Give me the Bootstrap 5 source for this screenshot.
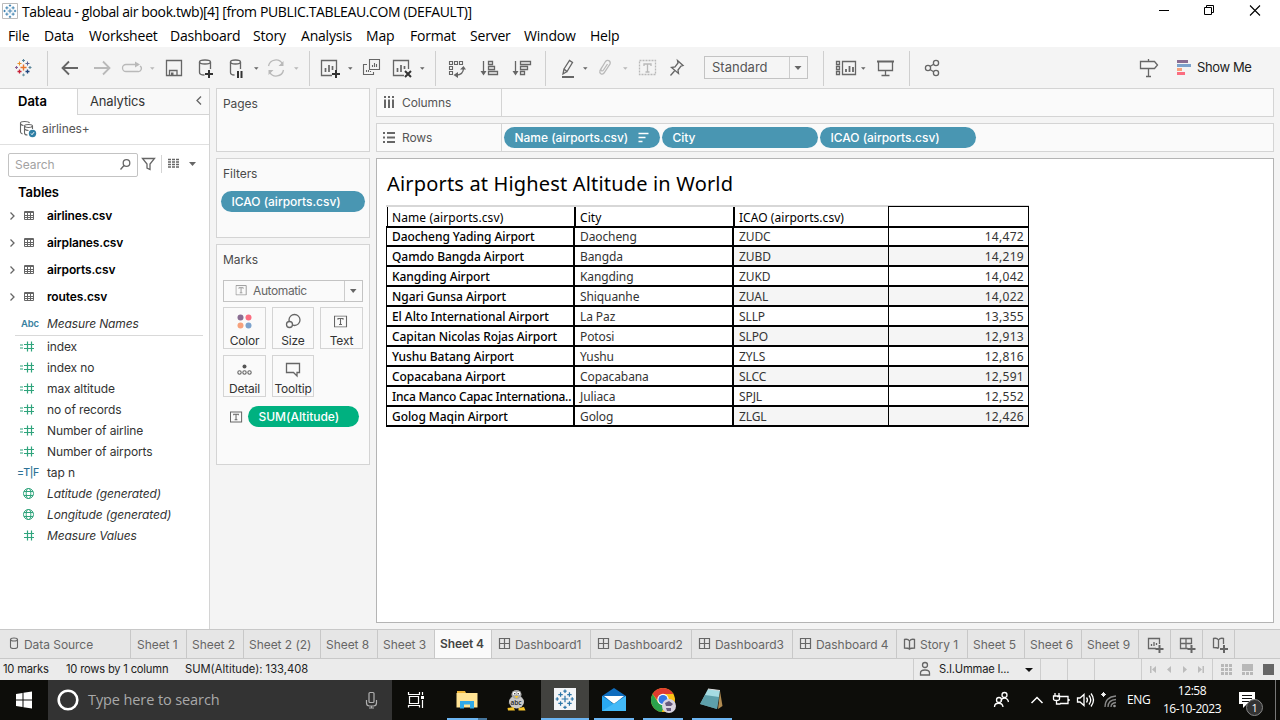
<!DOCTYPE html>
<html lang="en">
<head>
<meta charset="utf-8">
<title>Tableau - global air book</title>
<link href="https://cdn.jsdelivr.net/npm/bootstrap@5.3.0/dist/css/bootstrap.min.css" rel="stylesheet">
<style>
:root{--ui:Inter,"Liberation Sans",sans-serif;--sys:"Open Sans","Noto Sans",sans-serif;--tb:"Noto Sans","Open Sans",sans-serif;--line:#d4d4d4}
body{width:1280px;height:720px;overflow:hidden;background:#f4f4f4;font:400 12px/1 var(--ui);color:#333}
svg{display:block;overflow:visible;flex:none}
.ln{fill:none;stroke:#666;stroke-width:1.3}
.thin{stroke-width:1.1}
.bold{stroke-width:1.8}
.dim{stroke:#b9b9b9}
.t{white-space:nowrap}
.titlebar{height:24px;font:14px/24px var(--sys);letter-spacing:-.38px;color:#000}
.menubar{height:23px;font:14px/24px var(--sys);letter-spacing:-.2px;color:#000;display:grid;grid-template-columns:36px 45px 81px 83px 48px 65px 44px 60px 54px 66px 60px;padding-left:8px}
.toolbar{height:41px;display:grid;grid-template-columns:47px 43px 28px 42px 30px 32px 40px 47px 46px 30px 50px 40px 30px 40px 47px 40px 30px 41px 120px 47px 39px 46px 175px 39px 1fr}
.std{margin:9px 0 0 1px;width:104px;height:23px;border:1px solid #c3c3c3;background:#f5f5f5;font-size:13px;line-height:21px;color:#555}
.std span{padding-left:7px}
.showme{font-size:13px;line-height:41px;color:#222;letter-spacing:-.4px}
.work{height:541px;display:grid;grid-template-columns:210px 6px 154px 6px 898px 6px}
.side{border-top:1px solid var(--line);border-right:1px solid var(--line);background:#fff;height:541px}
.side-tabs{height:26px;line-height:25px;font-size:13px}
.side-tabs .off{width:132px;border-left:1px solid var(--line);border-bottom:1px solid var(--line);background:#f9f9f9;padding-left:12px;letter-spacing:-.15px}
.side-tabs .on{width:77px;padding-left:18px;color:#000;font-weight:600}
.src{height:30px;border-bottom:1px solid #e0e0e0;line-height:28px;color:#555;letter-spacing:-.1px}
.find{height:38px}
.find-box{width:130px;height:24px;border:1px solid #c3c3c3;border-radius:2px;color:#a2a2a2;line-height:22px;padding-left:6px;letter-spacing:-.05px;margin:8px 0 0 8px}
.tables{height:19px;line-height:18px;padding-left:18px;font-size:13px;font-weight:600;color:#000;letter-spacing:-.1px}
.tbl-row{height:27px;line-height:27px;font-weight:600;color:#000;letter-spacing:-.13px}
.tbl-row svg{width:47px;height:27px}
.mnames{height:26px;line-height:27px;letter-spacing:-.12px}
.abc{width:47px;padding-left:21px;font:600 9.5px/28px var(--ui);color:#38809f}
.rule{margin:-1px 6px 0 15px;height:1px;border-top:1px solid #d9d9d9}
.fld{height:21px;line-height:21px;font-size:12px;letter-spacing:-.12px}
.fld svg{width:47px;height:21px}
.tf{width:47px;padding-left:17px;font-size:10.5px;color:#2d7297;font-weight:500;letter-spacing:-.35px}
.panel{border:1px solid var(--line);background:#fafafa}
.panel-h{padding-left:6px;line-height:29px;color:#4a4a4a;letter-spacing:-.05px}
.pill{height:21px;border-radius:11px;background:#4996b2;color:#fff;line-height:21px;padding-left:10.500px;font-weight:500;letter-spacing:-.02px}
.mk{width:140px;height:22px;border:1px solid #c3c3c3;color:#666;line-height:20px;background:#fafafa;margin:6px 0 5px 6px;letter-spacing:-.4px}
.mkgrid{display:grid;grid-template-columns:43px 42px 43px;gap:6px;margin-left:6px}
.mkb{height:42px;border:1px solid var(--line);text-align:center;background:#fafafa;letter-spacing:-.2px}
.mkb svg{height:24px;width:100%}
.mkb div{line-height:17px}
.shelf{height:29px;line-height:27px;color:#555;letter-spacing:-.1px}
.shelf .hd{width:125px;border-right:1px solid var(--line)}
.view{border:1px solid #b4b4b4;background:#fff;height:465px;padding:12px 0 0 9px;font-family:var(--tb);color:#000}
.view h1{font:400 20px/26px var(--tb);letter-spacing:.17px;margin:0 0 0 1px;color:#000}
.gridt{width:643px;margin-top:8px;border-top:2px solid #d7d7d7;font-size:12px}
.gridt .r{display:grid;grid-template-columns:187px 159px 156px 141px;height:20px;line-height:20px;border-bottom:2px solid #000}
.gridt .r>div{border-left:2px solid #000;padding-left:5px;overflow:hidden;white-space:nowrap;color:#333;letter-spacing:-.1px}
.gridt .r>div:first-child{font-weight:500;color:#000;border-left-width:1px;letter-spacing:-.06px}
.gridt .r>div:nth-child(4){border-left-width:1px;border-right:1px solid #000;text-align:right;padding:0 4px 0 0;letter-spacing:.3px}
.gridt .r:nth-child(odd):not(.hdr)>div:nth-child(n+3){background:#f5f5f5}
.gridt .r:nth-child(2){height:19px;line-height:18px}
.gridt .r .fit{letter-spacing:-.22px}
.gridt .hdr{height:21px;line-height:21px}
.gridt .hdr>div{color:#000;letter-spacing:.05px}
.gridt .hdr>div:first-child{margin-left:1px;padding-left:4px;font-weight:400;letter-spacing:.1px}
.gridt .hdr>div:nth-child(2),.gridt .hdr>div:nth-child(3){margin-left:1px;padding-left:4px}
.gridt .hdr>div:nth-child(4){border-top:1px solid #000;margin-top:-1px}
.tabs{height:30px;border-top:1px solid #c8c8c8;border-bottom:1px solid #c8c8c8;background:#e6e6e6;line-height:30px;color:#666;display:grid;grid-template-columns:131px 56px 57px 77px 57px 57px 57px 99px 101px 101px 104px 71px 57px 57px 57px 32px 32px 32px;font-size:12px;letter-spacing:-.05px}
.tabs>div{border-right:1px solid #c8c8c8;padding-left:5px;display:flex;white-space:nowrap;height:28px}
.tabs>div:nth-child(2){padding-left:6px}
.tabs .cur{background:#fafafa;color:#444;font-weight:600;line-height:28px;letter-spacing:-.1px}
.tabs .ic{padding-left:0}
.status{height:21px;background:#ebebeb;line-height:21px;font-size:11.2px;color:#222;display:grid;grid-template-columns:66px 119px 728px 127px 27px 27px 47px 71px 1fr}
.status .s{border-left:1px solid #cdcdcd}
.tight{letter-spacing:-.2px}
.task{height:40px;background:#0d0d0a;display:grid;grid-template-columns:48px 344px 48px 52px 49px 48px 49px 49px 49px 240px 147px 36px 66px 1fr;color:#fff;font-family:var(--sys)}
.cort{background:#333;color:#a9a9a9;font-size:14.500px;line-height:40px;letter-spacing:-.1px}
.app-on{background:#42423f}
.eng{font-size:12px;line-height:40px;padding-left:4px;letter-spacing:-.4px}
.clock{font-size:12px;text-align:center;letter-spacing:-.45px;line-height:18px;padding-top:2px}
</style>
</head>
<body>
<svg width="0" height="0" class="position-absolute">
<defs>
<symbol id="tblmark" viewBox="0 0 18 18"><g fill="none" stroke-width="1.1">
<path stroke="#e8762d" stroke-width="1.400" d="M9 6v6M6 9h6"/><path stroke="#5b6591" d="M13 3v4M11 5h4"/><path stroke="#5b879b" d="M9 .5v3M7.500 2h3M15.500 7.500v3M14 9h3"/><path stroke="#c72037" stroke-width="1.300" d="M5 11v4M3 13h4"/><path stroke="#1f457e" stroke-width="1.300" d="M13 11v4M11 13h4"/><path stroke="#eb9129" d="M5 3v4M3 5h4"/><path stroke="#7099a6" d="M9 15v3M7.500 16.500h3"/><path stroke="#8b5f96" d="M2 7.500v3M.5 9h3"/></g></symbol>
<symbol id="tblblue" viewBox="0 0 18 18"><path fill="none" stroke="#2d76a8" stroke-width="1.100" d="M9 6v6M6 9h6M13 3v4M11 5h4M9 .5v3M7.500 2h3M15.500 7.500v3M14 9h3M5 11v4M3 13h4M13 11v4M11 13h4M5 3v4M3 5h4M9 15v3M7.500 16.500h3M2 7.500v3M.5 9h3"/></symbol>
<symbol id="dd" viewBox="0 0 6 4"><path d="M0 .5h5.500L2.750 3.500z"/></symbol>
<symbol id="trow" viewBox="0 0 47 27"><path class="ln" d="M10.500 10.500l3.500 3.500-3.500 3.500"/><path fill="none" stroke="#666" d="M24.500 9.500h9v8h-9zM24 10.500h10M24 13.500h10M24 15.500h10M27.500 11v7M30.500 11v7"/></symbol>
<symbol id="num" viewBox="0 0 47 21"><path fill="none" stroke="#2fa47c" stroke-width="1.200" d="M20 9h3M20 12h3M24 8.500h10M24 12.500h10M27.500 5.500v10M31.500 5.500v10"/></symbol>
<symbol id="hash" viewBox="0 0 47 21"><path fill="none" stroke="#2fa47c" stroke-width="1.200" d="M24 8.500h10M24 12.500h10M27.500 5.500v10M31.500 5.500v10"/></symbol>
<symbol id="globe" viewBox="0 0 47 21"><g fill="none" stroke="#2fa47c"><circle cx="28.500" cy="10.500" r="5"/><ellipse cx="28.500" cy="10.500" rx="2.300" ry="5"/><path d="M24 8.500h9M24 12.500h9"/></g></symbol>
<symbol id="dash" viewBox="0 0 22 28"><path fill="none" stroke="#666" stroke-width="1.200" d="M7.500 8.500h10v10h-10zM12.500 8.500v10M7.500 13.500h10"/></symbol>
<symbol id="tbox" viewBox="0 0 14 12"><path fill="none" stroke="#666" stroke-width="1.100" d="M.5.5h12v11H.5zM4 4.200V3h5v1.200M6.500 3v6M5 9h3"/></symbol>
</defs></svg>

<div class="titlebar bg-white d-flex">
<svg width="22" height="24" viewBox="0 0 22 24"><path fill="#fff" stroke="#bbb" d="M2.500 3.500h15v15h-15z"/><use href="#tblblue" x="3" y="4" width="14" height="14"/></svg>
<div class="t flex-grow-1">Tableau - global air book.twb)[4] [from PUBLIC.TABLEAU.COM (DEFAULT)]</div>
<svg width="140" height="24" viewBox="1140 0 140 24"><g fill="none" stroke="#000"><path d="M1159 10.500h10M1204.500 7.500h7v7h-7zM1206.500 7.500v-2h7v7h-2"/><path d="M1250 5.500l10 10M1260 5.500l-10 10" stroke-width="1.100"/></g></svg>
</div>
<div class="menubar bg-white"><div>File</div><div>Data</div><div>Worksheet</div><div>Dashboard</div><div>Story</div><div>Analysis</div><div>Map</div><div>Format</div><div>Server</div><div>Window</div><div>Help</div></div>

<div class="toolbar">
<svg width="47" height="41" viewBox="0 47 47 41"><use href="#tblmark" x="14.500" y="58.500" width="18" height="18"/></svg>
<svg width="43" height="41" viewBox="47 47 43 41"><path stroke="#cfcfcf" d="M47.500 51v35"/><path class="ln bold" d="M78 68H63M69 61.500L62.500 68l6.500 6.500"/></svg>
<svg width="28" height="41" viewBox="90 47 28 41"><path class="ln bold dim" d="M94 68h15M103 61.500l6.500 6.500-6.500 6.500"/></svg>
<svg width="42" height="41" viewBox="118 47 42 41"><path class="ln dim" d="M135 71.500h-9a3.500 3.500 0 0 1 0-7h10M134 71.500h4a3 3 0 0 0 2-5.500"/><path fill="#b9b9b9" d="M135 61.500l5 3-5 3z"/><use href="#dd" x="150" y="66.500" width="5" height="4" fill="#b9b9b9"/></svg>
<svg width="30" height="41" viewBox="160 47 30 41"><path class="ln" d="M166.500 60.500h15v15h-15zM169.500 75.500v-5h7.500v5"/><path fill="#666" d="M171 72.500h2.500v3H171z"/></svg>
<svg width="32" height="41" viewBox="190 47 32 41"><path class="ln" d="M199.500 62v10.500c0 1.500 2 2.500 5 2.500M210.500 62v7"/><ellipse class="ln" cx="205" cy="62" rx="5.500" ry="2"/><path stroke="#333" stroke-width="2" d="M209 70v8M205 74h8"/></svg>
<svg width="40" height="41" viewBox="222 47 40 41"><path class="ln" d="M230.500 62v10.500c0 1.500 2 2.500 4 2.500M240.500 62v7"/><ellipse class="ln" cx="235.500" cy="62" rx="5" ry="2"/><path stroke="#333" stroke-width="2" d="M238 71v7M241.500 71v7"/><use href="#dd" x="254" y="66.500" width="5" height="4" fill="#666"/></svg>
<svg width="47" height="41" viewBox="262 47 47 41"><path class="ln dim" d="M268.500 66a7.500 7.500 0 0 1 14-2M283.500 70a7.500 7.500 0 0 1-14 2"/><path fill="#b9b9b9" d="M283.500 61v5h-5zM268.500 75v-5h5z"/><use href="#dd" x="294" y="66.500" width="5" height="4" fill="#b9b9b9"/></svg>
<svg width="46" height="41" viewBox="309 47 46 41"><path stroke="#cfcfcf" d="M309.500 51v35"/><path class="ln" d="M332 75.500h-10.500v-15h15V70"/><path stroke="#666" stroke-width="1.700" d="M325.500 72v-4M329 72v-7M332.500 70v-4"/><path stroke="#333" stroke-width="2" d="M336 70v8M332 74h8"/><use href="#dd" x="348" y="66.500" width="5" height="4" fill="#666"/></svg>
<svg width="30" height="41" viewBox="355 47 30 41"><path class="ln thin" d="M369.500 59.500h10v10h-10zM367 64.500h-3.500v10h10V72"/><path stroke="#666" stroke-width="1.100" d="M372.500 67v-2M374.500 67v-4M376.500 67v-3M366.500 72v-2M368.500 72v-2M370.500 72v-1"/></svg>
<svg width="50" height="41" viewBox="385 47 50 41"><path class="ln" d="M404 75.500h-10.500v-15h15V69"/><path stroke="#666" stroke-width="1.700" d="M397.500 72v-4M401 72v-7M404.500 69v-3"/><path stroke="#333" stroke-width="2" d="M405 71l6 6M411 71l-6 6"/><use href="#dd" x="420" y="66.500" width="5" height="4" fill="#666"/></svg>
<svg width="40" height="41" viewBox="435 47 40 41"><path stroke="#cfcfcf" d="M435.500 51v35"/><path class="ln thin" d="M449.500 61.500h3v3h-3zM454.500 61.500h3v3h-3zM459.500 61.500h3v3h-3zM449.500 66.500h3v3h-3zM449.500 71.500h3v3h-3z"/><path class="ln" d="M463.500 68c0 5-2.500 7-7.500 7"/><path fill="#666" d="M460 69.500l3.500-3.500 2.500 3.500zM458 72l-4.500 3 4.500 3z"/></svg>
<svg width="30" height="41" viewBox="475 47 30 41"><path class="ln" d="M483.500 61v12M488.500 61.500h4v3h-4zM488.500 66.500h6v3h-6zM488.500 71.500h9v3h-9z"/><path fill="#666" d="M480.500 71h6l-3 4.500z"/></svg>
<svg width="40" height="41" viewBox="505 47 40 41"><path class="ln" d="M515.500 61v12M520.500 61.500h10v3h-10zM520.500 66.500h7v3h-7zM520.500 71.500h4v3h-4z"/><path fill="#666" d="M512.500 71h6l-3 4.500z"/></svg>
<svg width="47" height="41" viewBox="545 47 47 41"><path stroke="#cfcfcf" d="M545.500 51v35"/><path class="ln" d="M564 69l5.500-8.500 3 2-5.500 9zM564 69l-1 5 4-2.500"/><path stroke="#666" stroke-width="2" d="M562 77h12"/><use href="#dd" x="583" y="66.500" width="5" height="4" fill="#666"/></svg>
<svg width="40" height="41" viewBox="592 47 40 41"><path class="ln dim" d="M602 67l-2 3.500c-1 3 2 5 4 2.500l6-9c1-3-2.500-5-4.500-2.500l-4.500 7.500c-.5 2 1.500 2.500 2.500 1l4-6"/><use href="#dd" x="623" y="66.500" width="5" height="4" fill="#b9b9b9"/></svg>
<svg width="30" height="41" viewBox="632 47 30 41"><path class="ln dim" stroke-dasharray="2 1" d="M639.500 60.500h16v14h-16z"/><path class="ln dim" d="M644 66v-2h7v2M647.500 64v8M645.500 72h4"/></svg>
<svg width="41" height="41" viewBox="662 47 41 41"><path class="ln" d="M677.500 60.500l5.500 5-2 .5-3 4 .5 3.500-7-6 3.500-.5 3-4zM674.500 71l-4 4.500"/></svg>
<div class="std d-flex"><span class="flex-grow-1">Standard</span><svg width="18" height="21" viewBox="0 0 18 21"><path stroke="#ccc" d="M.5 0v21"/><path fill="#666" d="M5.500 9h7l-3.500 4z"/></svg></div>
<svg width="47" height="41" viewBox="823 47 47 41"><path stroke="#cfcfcf" d="M823.500 51v35"/><path class="ln" d="M836.500 61.500h3v3h-3zM836.500 66.500h3v3h-3zM836.500 71.500h3v3h-3zM842.500 61.500h13v13h-13z"/><path stroke="#666" stroke-width="1.800" d="M846 72v-3M849.500 72v-6M853 72v-5"/><use href="#dd" x="861" y="66.500" width="5" height="4" fill="#666"/></svg>
<svg width="39" height="41" viewBox="870 47 39 41"><path stroke="#666" stroke-width="2" d="M877 61.500h17"/><path class="ln" d="M878.500 62v8.500h14V62M885.500 71v4M881.500 75.500h8"/></svg>
<svg width="46" height="41" viewBox="909 47 46 41"><path stroke="#cfcfcf" d="M909.500 51v35"/><g class="ln"><circle cx="928" cy="68" r="2.600"/><circle cx="936" cy="63" r="2.600"/><circle cx="936" cy="73" r="2.600"/><path d="M930 66.500l4-2.500M930 69.500l4 2.500"/></g></svg>
<div></div>
<svg width="39" height="41" viewBox="1130 47 39 41"><path class="ln" d="M1140.500 61.500h14l3 3.500-3 3.500h-14zM1148.500 59v2M1148.500 69v7.500M1146 76.500h5"/></svg>
<div class="showme d-flex"><svg width="28" height="41" viewBox="1169 47 28 41"><path fill="#8a6d92" d="M1177 60h11v3h-11z"/><path fill="#7ca2cc" d="M1177 64h14v3h-14z"/><path fill="#f6a17c" d="M1177 68h5v3h-5z"/><path fill="#fb6d80" d="M1177 72h8v3h-8z"/></svg><span class="t">Show Me</span></div>
</div>

<div class="work">
<div class="side">
<div class="side-tabs d-flex"><div class="on">Data</div><div class="off d-flex justify-content-between"><span>Analytics</span><svg width="15" height="25"><path class="ln" d="M7 7.500L3 11.500l4 4"/></svg></div></div>
<div class="src d-flex"><svg width="42" height="30" viewBox="0 115 42 30"><path class="ln thin" d="M20.500 123v9c0 1 1 1.500 2 2M20.500 123c0-2 8-2 9 0M24.500 126v7c0 1 1 2 3 2M24.500 126c0-2 8-2 8 0v3M24.500 126c1 2 7 2 8 0M20.500 124c1 1 2 1.500 3 1.500M24.500 129c1 1 3 1.500 4 1.500"/><circle cx="32.500" cy="133.500" r="3.700" fill="#2f7fa5"/><path fill="none" stroke="#fff" d="M31 133.500l1 1.200 2-2.500"/></svg><span>airlines+</span></div>
<div class="find d-flex"><div class="find-box d-flex justify-content-between">Search<svg width="20" height="22" viewBox="117 154 20 22"><circle class="ln" cx="126.500" cy="163" r="3.300"/><path class="ln" d="M124 165.500l-3.500 4"/></svg></div>
<svg width="71" height="39" viewBox="138 145 71 39"><path class="ln" d="M142.500 158.500h12l-4.500 5.500v5.500l-3-1.500v-4z"/><path stroke="#d4d4d4" d="M161.500 155v18"/><path stroke="#666" stroke-width="1.300" stroke-dasharray="3 1" d="M168 159.500h12M168 162h12M168 164.500h12M168 167h12"/><path fill="#666" d="M189 162h7l-3.500 4z"/></svg></div>
<div class="tables">Tables</div>
<div class="tbl-row d-flex"><svg><use href="#trow"/></svg>airlines.csv</div>
<div class="tbl-row d-flex"><svg><use href="#trow"/></svg>airplanes.csv</div>
<div class="tbl-row d-flex"><svg><use href="#trow"/></svg>airports.csv</div>
<div class="tbl-row d-flex"><svg><use href="#trow"/></svg>routes.csv</div>
<div class="mnames d-flex fst-italic"><span class="abc">Abc</span>Measure Names</div>
<div class="rule"></div>
<div class="fld d-flex"><svg><use href="#num"/></svg>index</div>
<div class="fld d-flex"><svg><use href="#num"/></svg>index no</div>
<div class="fld d-flex"><svg><use href="#num"/></svg>max altitude</div>
<div class="fld d-flex"><svg><use href="#num"/></svg>no of records</div>
<div class="fld d-flex"><svg><use href="#num"/></svg>Number of airline</div>
<div class="fld d-flex"><svg><use href="#num"/></svg>Number of airports</div>
<div class="fld d-flex"><span class="t tf">=T|F</span>tap n</div>
<div class="fld d-flex fst-italic"><svg><use href="#globe"/></svg>Latitude (generated)</div>
<div class="fld d-flex fst-italic"><svg><use href="#globe"/></svg>Longitude (generated)</div>
<div class="fld d-flex fst-italic"><svg><use href="#hash"/></svg>Measure Values</div>
</div>
<div></div>
<div class="d-flex flex-column" style="gap:6px">
<div class="panel" style="height:64px"><div class="panel-h">Pages</div></div>
<div class="panel" style="height:80px"><div class="panel-h">Filters</div><div class="pill" style="margin:3px 4px 0">ICAO (airports.csv)</div></div>
<div class="panel" style="height:221px"><div class="panel-h">Marks</div>
<div class="mk d-flex"><svg width="29" height="20"><use href="#tbox" x="11.500" y="4" width="12" height="10.500" opacity=".65"/></svg><span class="flex-grow-1">Automatic</span><svg width="18" height="20"><path stroke="#ccc" d="M.5 0v20"/><path fill="#666" d="M6 8h6.500L9.200 12z"/></svg></div>
<div class="mkgrid">
<div class="mkb"><svg viewBox="0 0 41 24"><circle cx="16.500" cy="9.500" r="3" fill="#8a6d92"/><circle cx="24.500" cy="9.500" r="3" fill="#fb6d80"/><circle cx="16.500" cy="17.500" r="3" fill="#f6a17c"/><circle cx="24.500" cy="17.500" r="3" fill="#7ca2cc"/></svg><div>Color</div></div>
<div class="mkb"><svg viewBox="0 0 40 24"><circle class="ln" cx="21.500" cy="12" r="5.500"/><circle class="ln" cx="16.500" cy="16.500" r="3" style="fill:#fafafa"/></svg><div>Size</div></div>
<div class="mkb"><svg viewBox="0 0 41 24"><use href="#tbox" x="13" y="7.500" width="14" height="12"/></svg><div>Text</div></div>
<div class="mkb"><svg viewBox="0 0 41 24"><circle cx="20.500" cy="10.500" r="2" fill="#555"/><g class="ln thin"><circle cx="15.500" cy="16.500" r="1.700"/><circle cx="20.500" cy="16.500" r="1.700"/><circle cx="25.500" cy="16.500" r="1.700"/></g></svg><div>Detail</div></div>
<div class="mkb"><svg viewBox="0 0 40 24"><path class="ln" d="M13.500 7.500h13v9H24v3.500l-3.500-3.500h-7z"/></svg><div>Tooltip</div></div>
</div>
<div class="d-flex" style="margin-top:9px"><svg width="31" height="21"><use href="#tbox" x="13" y="5" width="13" height="12"/></svg><div class="pill" style="width:111px;background:#00b180">SUM(Altitude)</div></div>
</div>
</div>
<div></div>
<div class="d-flex flex-column" style="gap:6px">
<div class="panel shelf d-flex"><div class="hd d-flex"><svg width="25" height="27" viewBox="377 89 25 27"><path stroke="#666" stroke-width="2" stroke-dasharray="2 1.500 9 0" d="M385 96v12M389 96v12M393 96v12"/></svg>Columns</div></div>
<div class="panel shelf d-flex align-items-center" style="gap:2px"><div class="hd d-flex"><svg width="25" height="27" viewBox="377 124 25 27"><path stroke="#666" stroke-width="2" stroke-dasharray="2 2 9 0" d="M383 133h12M383 137.500h12M383 142h12"/></svg>Rows</div>
<div class="pill d-flex" style="width:156px">Name (airports.csv)<svg width="22" height="21"><path stroke="#fff" stroke-width="1.700" d="M10.500 6.500h10M10.500 10.500h7M10.500 14.500h4"/></svg></div><div class="pill" style="width:156px">City</div><div class="pill" style="width:156px">ICAO (airports.csv)</div></div>
<div class="view">
<h1>Airports at Highest Altitude in World</h1>
<div class="gridt">
<div class="r hdr"><div>Name (airports.csv)</div><div>City</div><div>ICAO (airports.csv)</div><div></div></div>
<div class="r"><div>Daocheng Yading Airport</div><div>Daocheng</div><div>ZUDC</div><div>14,472</div></div>
<div class="r"><div>Qamdo Bangda Airport</div><div>Bangda</div><div>ZUBD</div><div>14,219</div></div>
<div class="r"><div>Kangding Airport</div><div>Kangding</div><div>ZUKD</div><div>14,042</div></div>
<div class="r"><div>Ngari Gunsa Airport</div><div>Shiquanhe</div><div>ZUAL</div><div>14,022</div></div>
<div class="r"><div>El Alto International Airport</div><div>La Paz</div><div>SLLP</div><div>13,355</div></div>
<div class="r"><div>Capitan Nicolas Rojas Airport</div><div>Potosi</div><div>SLPO</div><div>12,913</div></div>
<div class="r"><div>Yushu Batang Airport</div><div>Yushu</div><div>ZYLS</div><div>12,816</div></div>
<div class="r"><div>Copacabana Airport</div><div>Copacabana</div><div>SLCC</div><div>12,591</div></div>
<div class="r"><div><span class="fit">Inca Manco Capac Internationa..</span></div><div>Juliaca</div><div>SPJL</div><div>12,552</div></div>
<div class="r"><div>Golog Maqin Airport</div><div>Golog</div><div>ZLGL</div><div>12,426</div></div>
</div>
</div>
</div>
</div>

<div class="tabs">
<div class="ic"><svg width="24" height="28"><path class="ln thin" d="M10.500 9.500v7.500c0 2 7 2 7 0V9.500"/><ellipse class="ln thin" cx="14" cy="9.500" rx="3.500" ry="1.500"/></svg>Data Source</div>
<div>Sheet 1</div><div>Sheet 2</div><div>Sheet 2 (2)</div><div>Sheet 8</div><div>Sheet 3</div><div class="cur">Sheet 4</div>
<div class="ic"><svg width="23" height="28"><use href="#dash" width="22" height="28"/></svg>Dashboard1</div>
<div class="ic"><svg width="23" height="28"><use href="#dash" width="22" height="28"/></svg>Dashboard2</div>
<div class="ic"><svg width="23" height="28"><use href="#dash" width="22" height="28"/></svg>Dashboard3</div>
<div class="ic"><svg width="23" height="28"><use href="#dash" width="22" height="28"/></svg>Dashboard 4</div>
<div class="ic"><svg width="23" height="28"><path class="ln" d="M7.500 9.500c2-.5 4 0 5 1.500 1-1.500 3-2 5-1.500v8.500c-2 0-4 0-5 1.200-1-1.200-3-1.200-5-1.200zM12.500 11v8"/></svg>Story 1</div>
<div>Sheet 5</div><div>Sheet 6</div><div>Sheet 9</div>
<div class="ic"><svg width="31" height="28"><path class="ln" d="M17 18.500H9.500v-10h11V14M12.500 16v-2M15 16v-4M17.500 15v-2"/><path stroke="#666" stroke-width="2" d="M20.500 15v8M16.500 19h8"/></svg></div>
<div class="ic"><svg width="31" height="28"><path class="ln" d="M17 18.500H9.500v-10h11V14M15 8.500v10M9.500 13.500h11"/><path stroke="#666" stroke-width="2" d="M20.500 15v8M16.500 19h8"/></svg></div>
<div class="ic"><svg width="31" height="28"><path class="ln" d="M20.500 14V8.500c-2-.5-4 0-5 1.500-1-1.500-3-2-5-1.500v9c2 0 4 0 5 1.200M15.500 10v8"/><path stroke="#666" stroke-width="2" d="M21 15v8M17 19h8"/></svg></div>
</div>
<div class="status">
<div class="tight" style="padding-left:3px">10 marks</div><div class="tight">10 rows by 1 column</div><div>SUM(Altitude): 133,408</div>
<div class="s d-flex"><svg width="25" height="21" viewBox="914 659 25 21"><circle class="ln" cx="925" cy="665" r="2.500"/><path class="ln" d="M920.500 675v-2c0-4 9-4 9 0v2z"/></svg><span class="tight">S.I.Ummae I...</span><svg width="24" height="21"><path d="M16 9h8l-4 4z" fill="#111"/></svg></div><div class="s"></div><div class="s"></div><div class="s"></div>
<svg width="71" height="21" viewBox="1141 659 71 21"><path stroke="#cdcdcd" d="M1141.500 659v21"/><path fill="#bcbcbc" d="M1150 666h1.500v7h-1.500zM1156 666v7l-4-3.500zM1171 666v7l-4-3.500zM1183 666v7l4-3.500zM1198 666v7l4-3.500zM1202.500 666h1.500v7h-1.500z"/></svg>
<svg width="68" height="21" viewBox="1212 659 68 21"><path stroke="#cdcdcd" d="M1212.500 659v21"/><path stroke="#b8b8b8" stroke-width="3" stroke-dasharray="3 1" d="M1221 665.500h11M1221 669.500h11M1221 673.500h11M1242 673.500h11"/><path fill="#b8b8b8" d="M1242 664h11v7h-11z"/><path fill="#666" d="M1263 664h11v11h-11z"/></svg>
</div>
<div class="task">
<svg width="48" height="40" viewBox="0 680 48 40"><path fill="#fff" d="M16 694l6.500-1v6.500H16zM23.500 692.800l8.500-1.300v8h-8.500zM16 700.500h6.500v6.500l-6.500-1zM23.500 700.500h8.500v8l-8.500-1.300z"/></svg>
<div class="cort d-flex"><svg width="40" height="40" viewBox="48 680 40 40"><circle cx="68" cy="700" r="9.300" fill="none" stroke="#fff" stroke-width="2.600"/></svg><span class="flex-grow-1 t">Type here to search</span><svg width="40" height="40" viewBox="352 680 40 40"><g fill="none" stroke="#b0b0b0" stroke-width="1.200"><rect x="369" y="692.500" width="5" height="10" rx="1"/><path d="M366.500 700v3c0 2 1.500 3 3 3h4c1.500 0 3-1 3-3v-3M371.500 706v2M369 708h5"/></g></svg></div>
<svg width="48" height="40" viewBox="392 680 48 40"><path fill="none" stroke="#fff" stroke-width="1.200" d="M409.500 696.500h9v7h-9zM408.500 692v2.500h11V692M408.500 707.500v-2h11v2M422.500 692v3M422.500 700v8"/><path fill="#fff" d="M421 696h3v3h-3z"/></svg>
<svg width="52" height="40" viewBox="440 680 52 40"><path fill="#f0b73a" d="M457 691h8l1 2h11v5h-20z"/><path fill="#ffe394" d="M456.500 693h21v14.500h-21z"/><path fill="#30a9e8" d="M460 701h14v7.500h-4v-4h-6v4h-4z"/><path fill="#6cb5f2" d="M447 718h31v2h-31z"/><path fill="#45759c" d="M478 718h9v2h-9z"/></svg>
<svg width="49" height="40" viewBox="492 680 49 40"><path fill="#222" d="M511 694c0-3 10-3 10 0l3 10h-16z"/><ellipse cx="516.500" cy="702" rx="7.500" ry="6.500" fill="#c9c9c9"/><ellipse cx="516.500" cy="694.500" rx="5" ry="4.500" fill="#aaa"/><circle cx="514.500" cy="693.500" r="1.700" fill="#fff"/><circle cx="518.500" cy="693.500" r="1.700" fill="#fff"/><circle cx="514.800" cy="693.700" r=".7" fill="#111"/><circle cx="518.200" cy="693.700" r=".7" fill="#111"/><path fill="#f6c42a" d="M514.500 696h4l-2 2.500zM507.500 708l6-1 1.500 3.500h-7zM518.500 708l5.500-1 1.500 3.500h-7z"/><text x="510.500" y="704.500" font-size="6.500" font-weight="600" fill="#222">abc</text></svg>
<svg class="app-on" width="48" height="40" viewBox="541 680 48 40"><path fill="#f4f5f7" d="M554 688h22v22h-22z"/><use href="#tblblue" x="555" y="689" width="20" height="20"/><path fill="#6cb5f2" d="M541 718h48v2h-48z"/></svg>
<svg width="49" height="40" viewBox="589 680 49 40"><path fill="#0f6cbd" d="M602 696l12-8 12 8v6h-24z"/><path fill="#fff" d="M604 696h20l-10 8z"/><path fill="#2aa8f0" d="M602 696l12 8 12-8v15h-24z"/><path fill="#58c8ff" d="M602 711l24-15v15z" opacity=".55"/><path fill="#6cb5f2" d="M594 718h40v2h-40z"/></svg>
<svg width="49" height="40" viewBox="638 680 49 40"><circle cx="663" cy="700" r="12" fill="#fbc116"/><path fill="#df3c30" d="M652.600 694a12 12 0 0 1 20.800 0H663l-4 8z"/><path fill="#2ba24c" d="M652.600 694a12 12 0 0 0 9 18l4-8-7-1z"/><circle cx="663" cy="699.500" r="5.700" fill="#fff"/><circle cx="663" cy="699.500" r="4.500" fill="#3478e5"/><circle cx="669" cy="706" r="7" fill="#d9d3df"/><path fill="#66597c" d="M665 703l4-2 4 3-2 2h-5zM666 708h5v3h-4z"/><path fill="#6cb5f2" d="M643 718h40v2h-40z"/></svg>
<svg width="49" height="40" viewBox="687 680 49 40"><path fill="#b08a50" d="M720 691l2.500 15-4.500 3z"/><path fill="#a5dbe2" d="M708 689l12 1.500-3 18.500-17-5z"/><path fill="#357f8c" d="M705 695l14 2-2 12-17-5z" opacity=".65"/><path stroke="#ddd" d="M708 689l12 1.500"/><path fill="#6cb5f2" d="M692 718h40v2h-40z"/></svg>
<div></div>
<svg width="147" height="40" viewBox="976 680 147 40"><g fill="none" stroke="#fff" stroke-width="1.300"><circle cx="1004.500" cy="695" r="2.500"/><path d="M1001 701c1-4 6.500-4 7.500 1"/><circle cx="999" cy="700" r="2.500"/><path d="M994.500 707c0-5 8-5 8.500 0"/><path d="M1031.500 703l5.500-5.500 5.500 5.500" stroke-width="1.500"/><path d="M1057 696.500h11v7h-8M1055 693v3M1059 693v3M1053.500 696h6v3c0 2-6 2-6 0zM1056.500 701v3h4M1069 699v2"/><path d="M1077.500 698h2.500l4-3.500v11l-4-3.500h-2.500zM1086.500 697.500q2 2.500 0 5M1089 695.500q3.500 4.500 0 9M1091 693.500q5 6.500 0 13"/><path d="M1103.500 692v5M1101 694.500h5M1102 693l3 3M1105 693l-3 3" stroke-width=".9"/><path stroke="#888" d="M1105 707q0-10 11-11M1108 707q0-7 8-7.500M1111 707q0-4 5-4.500"/></g><circle cx="1114.500" cy="706" r="1.300" fill="#999"/></svg>
<div class="t eng">ENG</div>
<div class="clock">12:58<br>16-10-2023</div>
<svg width="37" height="40" viewBox="1243 680 37 40" style="justify-self:end"><path fill="#fff" d="M1239 692h16v12h-8l-4 4v-4h-4z"/><path stroke="#111" d="M1242 695.500h10M1242 698.500h10M1242 701.500h7"/><circle cx="1254.500" cy="707.500" r="8" fill="#333" stroke="#888"/><text x="1251.500" y="711.500" font-size="11" fill="#fff">1</text><path stroke="#777" d="M1275.500 680v40"/></svg>
</div>
<script src="https://cdn.jsdelivr.net/npm/bootstrap@5.3.0/dist/js/bootstrap.bundle.min.js"></script>
</body>
</html>
